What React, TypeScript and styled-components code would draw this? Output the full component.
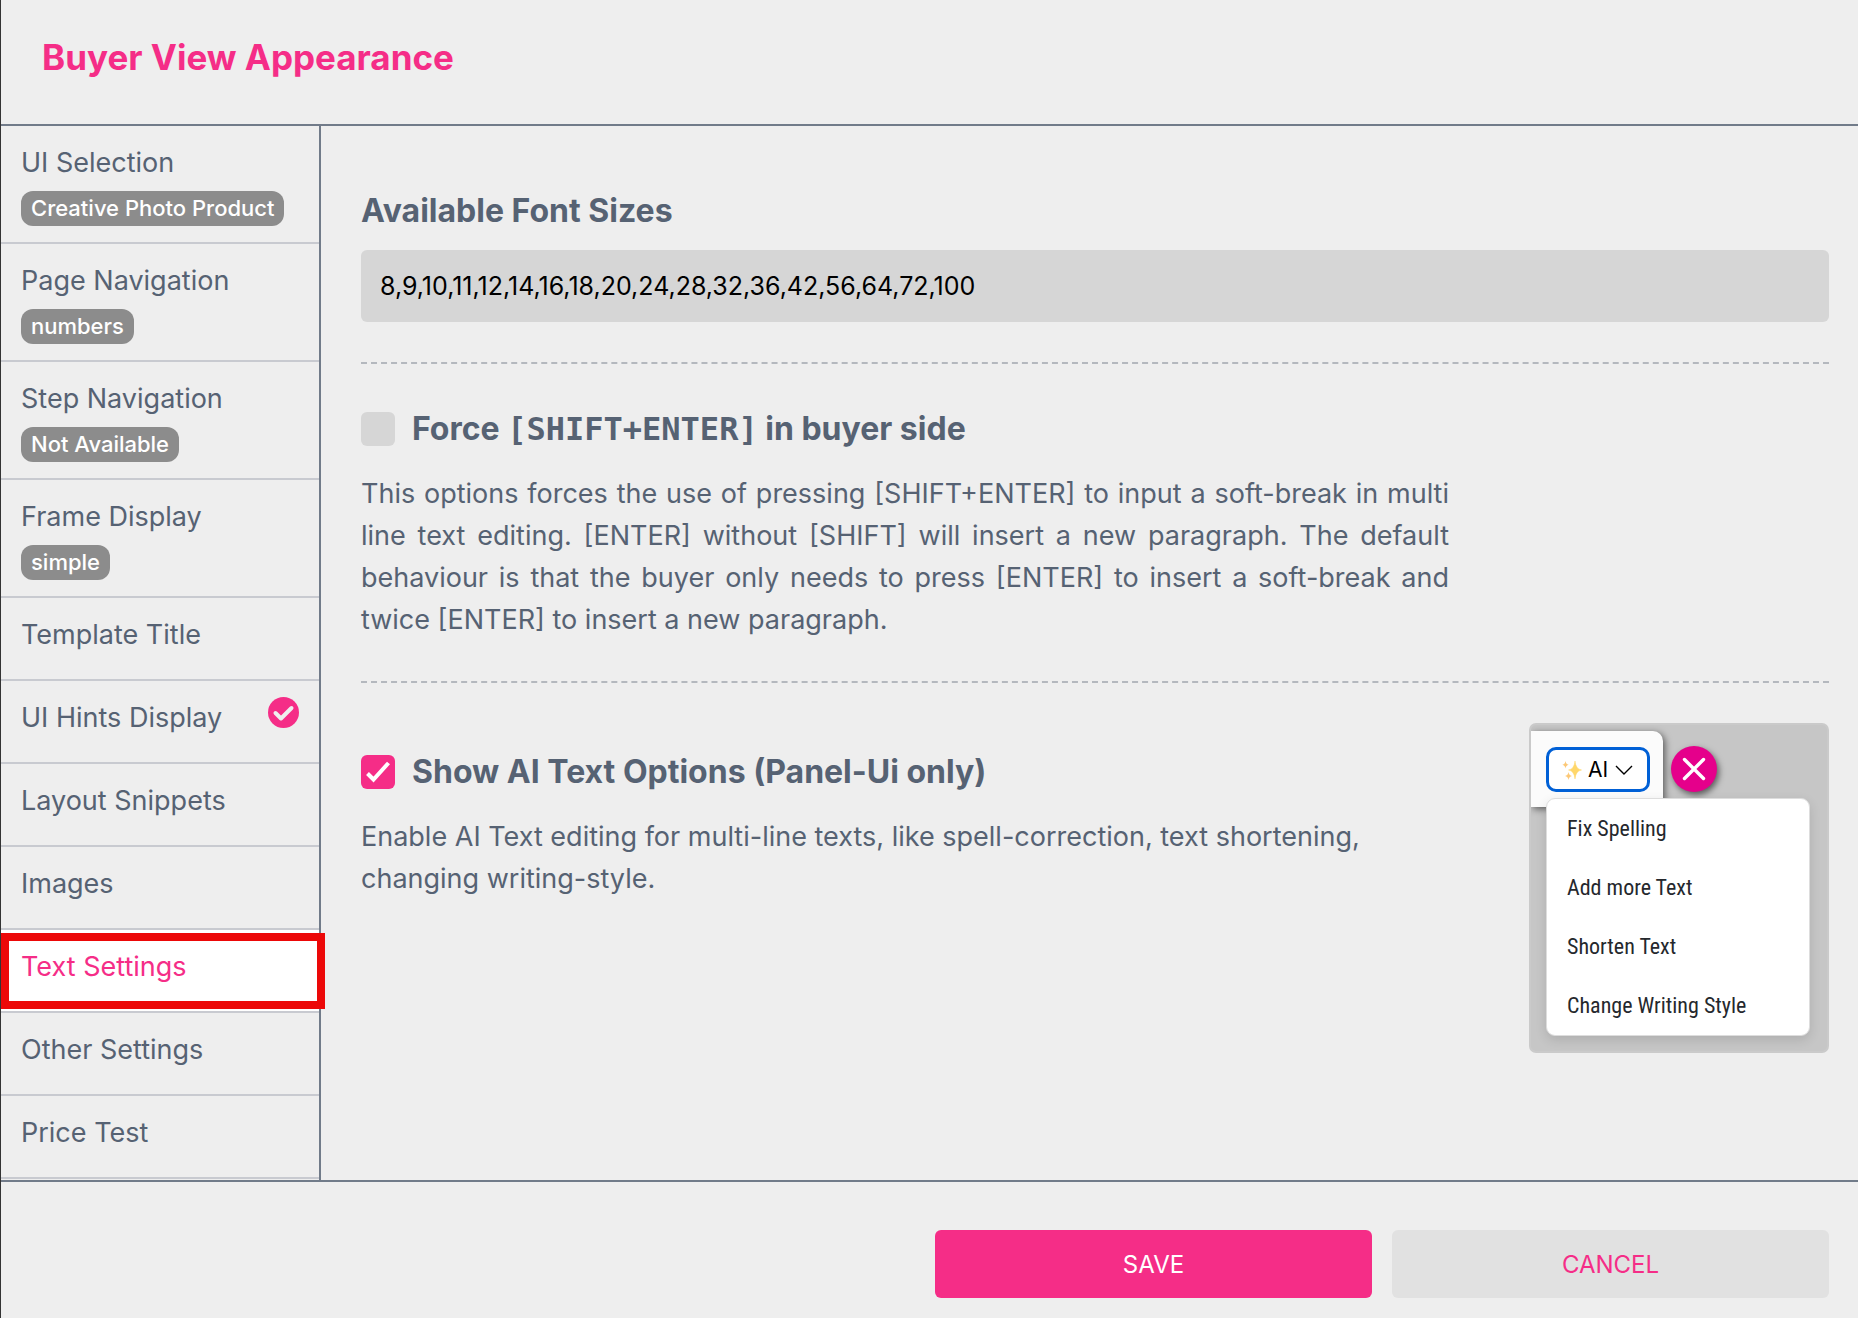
import React, { useState } from "react";
import styled, { createGlobalStyle } from "styled-components";

const pink = "#f52d87";
const slate = "#566273";
const line = "#717b89";
const surface = "#eeeeee";

const GlobalStyle = createGlobalStyle`
  *, *::before, *::after { box-sizing: border-box; }
  body {
    margin: 0;
    background: ${surface};
    color: ${slate};
    font-family: Inter, "Liberation Sans", sans-serif;
  }
  button, input { font-family: inherit; }
`;

const Page = styled.div`
  display: flex;
  flex-direction: column;
  min-height: 100vh;
  border-left: 1px solid #333333;
`;

const Header = styled.header`
  padding: 33px 41px 43px;
  border-bottom: 2px solid ${line};
`;

const Title = styled.h1`
  margin: 0;
  color: ${pink};
  font-size: 35px;
  font-weight: 700;
  line-height: 48px;
`;

const Body = styled.div`
  display: flex;
  flex: 1;
`;

const Nav = styled.nav`
  flex: 0 0 320px;
  border-right: 2px solid ${line};
`;

const NavItem = styled.button<{ $active?: boolean }>`
  position: relative;
  display: flex;
  align-items: flex-start;
  justify-content: space-between;
  width: 100%;
  min-height: 83px;
  padding: 16px 20px 16px;
  border: 0;
  border-bottom: 2px solid #c8cad0;
  background: ${(p) => (p.$active ? "#ffffff" : "transparent")};
  color: ${(p) => (p.$active ? pink : slate)};
  text-align: left;
  cursor: pointer;
`;

const NavText = styled.span`
  display: flex;
  flex-direction: column;
  align-items: flex-start;
  gap: 7px;
  font-size: 27px;
  line-height: 42px;
`;

const Badge = styled.span`
  padding: 0 10px;
  border-radius: 12px;
  background: #8c8c8c;
  color: #ffffff;
  font-size: 22px;
  font-weight: 500;
  line-height: 35px;
  white-space: nowrap;
`;

const Highlight = styled.span`
  position: absolute;
  inset: 3px -6px 2px 0;
  border: 8px solid #ec0808;
  pointer-events: none;
`;

const Content = styled.main`
  flex: 1;
  min-width: 0;
  padding: 61px 29px 40px 40px;
`;

const FieldLabel = styled.label`
  display: block;
  margin-bottom: 15px;
  font-size: 32px;
  font-weight: 700;
  line-height: 48px;
`;

const TextInput = styled.input`
  display: block;
  width: 100%;
  height: 72px;
  padding: 0 19px;
  border: 0;
  border-radius: 6px;
  background: #d6d6d6;
  color: #000000;
  font-size: 25px;
`;

const Divider = styled.hr`
  margin: 40px 0;
  border: 0;
  border-top: 2px dashed #b4b8be;
`;

const Option = styled.section<{ $top: number }>`
  flex: 0 1 1088px;
  max-width: 1088px;
  padding-top: ${(p) => p.$top}px;
`;

const OptionLabel = styled.label`
  display: flex;
  align-items: center;
  gap: 17px;
  margin-bottom: 27px;
  font-size: 32px;
  font-weight: 700;
  line-height: 34px;
  cursor: pointer;

  code {
    font-family: "DejaVu Sans Mono", monospace;
    font-size: 32px;
    line-height: 1;
  }
`;

const CheckFrame = styled.span`
  display: grid;
  flex: none;

  > * { grid-area: 1 / 1; }
  svg { pointer-events: none; }
`;

const CheckInput = styled.input`
  width: 34px;
  height: 34px;
  margin: 0;
  border-radius: 6px;
  background: #d6d6d6;
  appearance: none;
  cursor: pointer;

  &:checked { background: ${pink}; }
`;

const Description = styled.p<{ $justify?: boolean }>`
  margin: 0;
  font-size: 27px;
  line-height: 42px;
  text-align: ${(p) => (p.$justify ? "justify" : "left")};
`;

const OptionRow = styled.div`
  display: flex;
  justify-content: space-between;
  align-items: flex-start;
  gap: 40px;
`;

const Preview = styled.div`
  flex: 0 0 300px;
  padding: 6px 0 15px;
  border: 2px solid #cacaca;
  border-radius: 7px;
  background: #c6c6c6;
  overflow: hidden;
`;

const PreviewTop = styled.div`
  display: flex;
  align-items: flex-start;
  gap: 8px;
`;

const Toolbar = styled.div`
  width: 132px;
  height: 76px;
  padding: 16px 13px 0 15px;
  border-top-right-radius: 10px;
  background: #fbfbfb;
  box-shadow: 2px 2px 7px rgba(0, 0, 0, 0.55);
`;

const AiButton = styled.button`
  display: flex;
  align-items: center;
  justify-content: center;
  gap: 6px;
  width: 104px;
  height: 45px;
  padding: 0;
  border: 3px solid #0060d6;
  border-radius: 10px;
  background: #ffffff;
  color: #000000;
  font-size: 21px;
`;

const CloseButton = styled.button`
  display: grid;
  place-items: center;
  width: 46px;
  height: 46px;
  margin-top: 15px;
  padding: 0;
  border: 0;
  border-radius: 50%;
  background: #e5008b;
  box-shadow: 2px 3px 6px rgba(0, 0, 0, 0.55);
`;

const Menu = styled.ul`
  position: relative;
  width: 264px;
  margin: -9px 0 0 15px;
  padding: 0;
  border: 1px solid #dddddd;
  border-radius: 9px;
  background: #ffffff;
  box-shadow: 0 4px 12px rgba(0, 0, 0, 0.12);
  list-style: none;
`;

const MenuItem = styled.li`
  padding: 0 20px;
  color: #25282d;
  font-family: "Roboto Condensed", Roboto, sans-serif;
  font-size: 22px;
  line-height: 59px;
  white-space: nowrap;
`;

const Footer = styled.footer`
  display: grid;
  grid-template-columns: repeat(4, 1fr);
  gap: 20px;
  padding: 48px 29px 20px 20px;
  border-top: 2px solid ${line};
`;

const ActionButton = styled.button<{ $primary?: boolean }>`
  grid-column: ${(p) => (p.$primary ? 3 : 4)};
  height: 68px;
  border: 0;
  border-radius: 6px;
  background: ${(p) => (p.$primary ? pink : "#e1e1e1")};
  color: ${(p) => (p.$primary ? "#ffffff" : pink)};
  font-size: 24px;
  cursor: pointer;
`;

const items: { label: string; badge?: string; checked?: boolean }[] = [
  { label: "UI Selection", badge: "Creative Photo Product" },
  { label: "Page Navigation", badge: "numbers" },
  { label: "Step Navigation", badge: "Not Available" },
  { label: "Frame Display", badge: "simple" },
  { label: "Template Title" },
  { label: "UI Hints Display", checked: true },
  { label: "Layout Snippets" },
  { label: "Images" },
  { label: "Text Settings" },
  { label: "Other Settings" },
  { label: "Price Test" },
];

const actions = ["Fix Spelling", "Add more Text", "Shorten Text", "Change Writing Style"];

function CheckCircle() {
  return (
    <svg width="31" height="31" viewBox="0 0 31 31" aria-hidden="true">
      <circle cx="15.5" cy="15.5" r="15.5" fill={pink} />
      <path d="M7.5 16 L13 21.5 L23.5 11" fill="none" stroke={surface} strokeWidth="4" strokeLinecap="round" strokeLinejoin="round" />
    </svg>
  );
}

function Sparkles() {
  return (
    <svg width="20" height="22" viewBox="0 0 20 22" aria-hidden="true">
      <path d="M13 2 Q13.8 10.2 19.5 11 Q13.8 11.8 13 20 Q12.2 11.8 6.5 11 Q12.2 10.2 13 2Z" fill="#ffd76a" stroke="#ffd76a" strokeWidth=".5" />
      <path d="M3.5 2 Q4 5.3 6.6 5.8 Q4 6.3 3.5 9.6 Q3 6.3 .4 5.8 Q3 5.3 3.5 2Z" fill="#fcc877" />
      <path d="M6.5 13 Q7 16.4 10 17 Q7 17.6 6.5 21 Q6 17.6 3 17 Q6 16.4 6.5 13Z" fill="#fcc877" />
    </svg>
  );
}

function Checkbox({ id, initial }: { id: string; initial: boolean }) {
  const [on, setOn] = useState(initial);
  return (
    <CheckFrame>
      <CheckInput id={id} type="checkbox" checked={on} onChange={(e) => setOn(e.target.checked)} />
      {on && (
        <svg width="34" height="34" viewBox="0 0 34 34" aria-hidden="true">
          <path d="M6.5 18.5 L12.5 24.5 L27.5 8" fill="none" stroke="#ffffff" strokeWidth="4" strokeLinecap="butt" />
        </svg>
      )}
    </CheckFrame>
  );
}

export default function App() {
  const [active, setActive] = useState("Text Settings");
  const [sizes, setSizes] = useState("8,9,10,11,12,14,16,18,20,24,28,32,36,42,56,64,72,100");

  return (
    <Page>
      <GlobalStyle />
      <Header>
        <Title>Buyer View Appearance</Title>
      </Header>
      <Body>
        <Nav>
          {items.map((item) => (
            <NavItem key={item.label} type="button" $active={item.label === active} onClick={() => setActive(item.label)}>
              <NavText>
                {item.label}
                {item.badge && <Badge>{item.badge}</Badge>}
              </NavText>
              {item.checked && <CheckCircle />}
              {item.label === active && <Highlight />}
            </NavItem>
          ))}
        </Nav>
        <Content>
          <FieldLabel htmlFor="sizes">Available Font Sizes</FieldLabel>
          <TextInput id="sizes" type="text" value={sizes} onChange={(e) => setSizes(e.target.value)} />
          <Divider />
          <Option $top={8}>
            <OptionLabel htmlFor="force">
              <Checkbox id="force" initial={false} />
              <span>
                Force <code>[SHIFT+ENTER]</code> in buyer side
              </span>
            </OptionLabel>
            <Description $justify>
              This options forces the use of pressing [SHIFT+ENTER] to input a soft-break in multi line text
              editing. [ENTER] without [SHIFT] will insert a new paragraph. The default behaviour is that the
              buyer only needs to press [ENTER] to insert a soft-break and twice [ENTER] to insert a new
              paragraph.
            </Description>
          </Option>
          <Divider />
          <OptionRow>
            <Option $top={32}>
              <OptionLabel htmlFor="ai">
                <Checkbox id="ai" initial={true} />
                <span>Show AI Text Options (Panel-Ui only)</span>
              </OptionLabel>
              <Description>
                Enable AI Text editing for multi-line texts, like spell-correction, text shortening, changing
                writing-style.
              </Description>
            </Option>
            <Preview>
              <PreviewTop>
                <Toolbar>
                  <AiButton type="button">
                    <Sparkles />
                    AI
                    <svg width="20" height="12" viewBox="0 0 20 12" aria-hidden="true">
                      <path d="M2 2 L10 10 L18 2" fill="none" stroke="#000000" strokeWidth="1.4" />
                    </svg>
                  </AiButton>
                </Toolbar>
                <CloseButton type="button" aria-label="Close">
                  <svg width="24" height="24" viewBox="0 0 24 24" aria-hidden="true">
                    <path d="M2.5 2.5 L21.5 21.5 M21.5 2.5 L2.5 21.5" stroke="#ffffff" strokeWidth="3.4" strokeLinecap="round" />
                  </svg>
                </CloseButton>
              </PreviewTop>
              <Menu>
                {actions.map((a) => (
                  <MenuItem key={a}>{a}</MenuItem>
                ))}
              </Menu>
            </Preview>
          </OptionRow>
        </Content>
      </Body>
      <Footer>
        <ActionButton type="button" $primary>SAVE</ActionButton>
        <ActionButton type="button">CANCEL</ActionButton>
      </Footer>
    </Page>
  );
}
